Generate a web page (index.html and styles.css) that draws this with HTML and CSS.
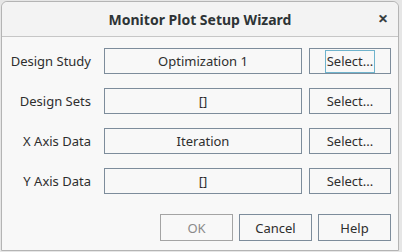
FILE: index.html
```html
<!DOCTYPE html>
<html lang="en">
<head>
    <meta charset="UTF-8">
    <title>Monitor Plot Setup Wizard</title>
    <link rel="stylesheet" href="styles.css">
</head>
<body>
    <div class="window">
        <div class="titlebar">
            <span class="title">Monitor Plot Setup Wizard</span>
            <button class="close">&#x2715;</button>
        </div>
        <div class="content">
            <div class="form">
                <label>Design Study</label>
                <div class="field">Optimization 1</div>
                <button class="btn"><span class="focus">Select...</span></button>

                <label>Design Sets</label>
                <div class="field">[]</div>
                <button class="btn">Select...</button>

                <label>X Axis Data</label>
                <div class="field">Iteration</div>
                <button class="btn">Select...</button>

                <label>Y Axis Data</label>
                <div class="field">[]</div>
                <button class="btn">Select...</button>
            </div>
            <div class="actions">
                <button class="btn disabled">OK</button>
                <button class="btn">Cancel</button>
                <button class="btn">Help</button>
            </div>
        </div>
    </div>
</body>
</html>
```

FILE: styles.css
```css
body {
    margin: 0;
    background-color: #e6e6e6;
    font-family: 'Noto Sans', 'Open Sans', sans-serif;
    font-size: 13px;
    color: #2e2e2e;
}
.window {
    margin: 1px 0 0 1px;
    width: 396px;
    height: 248px;
    border: 1px solid #b4b4b4;
    border-radius: 6px 6px 0 0;
    background-color: #f8f8f8;
    display: flex;
    flex-direction: column;
}
.titlebar {
    height: 34px;
    border-bottom: 1px solid #c6c6c6;
    background-color: #f3f3f3;
    border-radius: 6px 6px 0 0;
    display: flex;
    align-items: center;
    justify-content: center;
    position: relative;
}
.title {
    font-size: 14px;
    font-weight: bold;
    color: #2e3436;
}
.close {
    position: absolute;
    right: 6px;
    top: 8px;
    width: 18px;
    height: 18px;
    border: none;
    background: none;
    padding: 0;
    font-size: 12px;
    font-weight: bold;
    color: #2e3436;
    font-family: 'DejaVu Sans', sans-serif;
    -webkit-text-stroke: 0.6px #2e3436;
}
.content {
    padding: 11px 7px 0 0;
}
.form {
    display: grid;
    grid-template-columns: 95px 198px 82px;
    column-gap: 7px;
    row-gap: 14px;
    grid-auto-rows: 26px;
}
.form label {
    text-align: right;
    align-self: center;
    white-space: nowrap;
    padding-right: 6px;
}
.field {
    border: 1px solid #7d8c9b;
    background-color: #f8f8f8;
    display: flex;
    align-items: center;
    justify-content: center;
}
.btn {
    height: 26px;
    border: 1px solid #7d8c9b;
    background-color: #f8f8f8;
    font-family: inherit;
    font-size: 13px;
    color: #2e2e2e;
    padding: 0;
    display: flex;
    align-items: center;
    justify-content: center;
}
.btn .focus {
    border: 1px solid #6fb3cc;
    padding: 1px 1px 2px 1px;
}
.actions {
    display: flex;
    justify-content: flex-end;
    gap: 6px;
    margin-top: 20px;
}
.actions .btn {
    width: 73px;
    height: 27px;
}
.actions .disabled {
    border-color: #a4a4a4;
    color: #8a8a8a;
}
```
